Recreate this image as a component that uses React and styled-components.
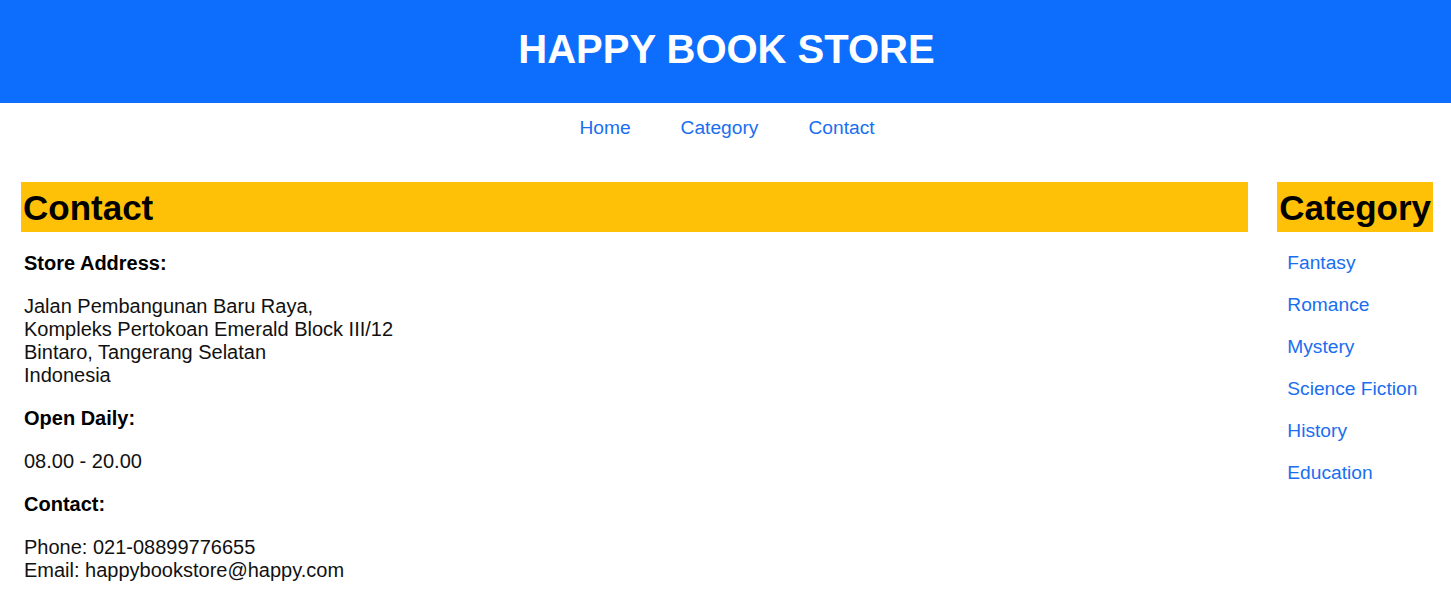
import React from "react";
import styled, { createGlobalStyle } from "styled-components";

const GlobalStyle = createGlobalStyle`
  html, body {
    margin: 0;
    padding: 0;
    background: #ffffff;
  }
  body {
    font-family: "Liberation Sans", Arial, Helvetica, sans-serif;
    font-size: 20px;
    color: #111111;
  }
  * { box-sizing: border-box; }
`;

const Header = styled.header`
  background: #0d6efd;
  padding: 26px 0 31px 2px;
  text-align: center;
`;

const Title = styled.h1`
  margin: 0;
  font-size: 40px;
  line-height: 46px;
  font-weight: 700;
  color: #ffffff;
`;

const Nav = styled.nav`
  display: flex;
  justify-content: center;
  gap: 50px;
  padding: 14px 0 10px 3px;
  font-size: 19.2px;
  line-height: 22px;
`;

const Link = styled.a`
  font-size: 19.2px;
  line-height: 22px;
  color: #1a6ef0;
  text-decoration: none;
`;

const Main = styled.main`
  display: flex;
  align-items: flex-start;
  gap: 29px;
  padding: 33px 18px 0 21px;
`;

const Content = styled.section`
  flex: 1;
  min-width: 0;
`;

const Sidebar = styled.aside`
  flex: 0 0 auto;
`;

const SectionTitle = styled.h2`
  margin: 0;
  padding: 5px 2px 3px;
  background: #ffc107;
  color: #000000;
  font-size: 35px;
  line-height: 42px;
  font-weight: 700;
`;

const Details = styled.div`
  display: flex;
  flex-direction: column;
  gap: 20px;
  padding: 20px 3px 0;
`;

const Label = styled.p`
  margin: 0;
  font-weight: 700;
  line-height: 23px;
  color: #000000;
`;

const Text = styled.p`
  margin: 0;
  line-height: 23px;
`;

const CategoryList = styled.ul`
  list-style: none;
  margin: 0;
  padding: 20px 0 0 10px;
  display: flex;
  flex-direction: column;
  gap: 20px;
`;

const CategoryItem = styled.li`
  display: block;
  font-size: 19.2px;
  line-height: 22px;
  height: 22px;
`;

const categories = [
  "Fantasy",
  "Romance",
  "Mystery",
  "Science Fiction",
  "History",
  "Education",
];

export default function App() {
  return (
    <>
      <GlobalStyle />
      <Header>
        <Title>HAPPY BOOK STORE</Title>
      </Header>
      <Nav>
        <Link href="#">Home</Link>
        <Link href="#">Category</Link>
        <Link href="#">Contact</Link>
      </Nav>
      <Main>
        <Content>
          <SectionTitle>Contact</SectionTitle>
          <Details>
            <Label>Store Address:</Label>
            <Text>
              Jalan Pembangunan Baru Raya,
              <br />
              Kompleks Pertokoan Emerald Block III/12
              <br />
              Bintaro, Tangerang Selatan
              <br />
              Indonesia
            </Text>
            <Label>Open Daily:</Label>
            <Text>08.00 - 20.00</Text>
            <Label>Contact:</Label>
            <Text>
              Phone: 021-08899776655
              <br />
              Email: happybookstore@happy.com
            </Text>
          </Details>
        </Content>
        <Sidebar>
          <SectionTitle>Category</SectionTitle>
          <CategoryList>
            {categories.map((c) => (
              <CategoryItem key={c}>
                <Link href="#">{c}</Link>
              </CategoryItem>
            ))}
          </CategoryList>
        </Sidebar>
      </Main>
    </>
  );
}
